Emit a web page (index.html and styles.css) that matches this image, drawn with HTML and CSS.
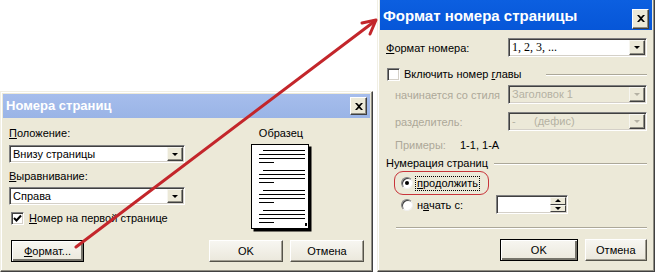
FILE: index.html
```html
<!doctype html>
<html lang="ru">
    <head>
        <meta charset="UTF-8" />
        <meta name="viewport" content="width=device-width, initial-scale=1.0" />
        <title>Номера страниц</title>
        <link rel="stylesheet" href="styles.css">
    </head>
    <body>
        <div class="desktop">
            <!-- Dialog: page numbers -->
            <div class="window win-pages">
                <div class="titlebar inactive">
                    <span class="title">Номера страниц</span>
                    <span class="close"><svg width="8" height="7" viewBox="0 0 8 7"><path d="M0 0h2l2 2 2-2h2L5 3.5 8 7H6L4 5 2 7H0l3-3.5z" fill="#000"/></svg></span>
                </div>
                <div class="client">
                    <div class="top-row">
                        <div class="fields">
                            <div class="label first"><u>П</u>оложение:</div>
                            <div class="combo c-pos"><span class="combo-text">Внизу страницы</span><span class="combo-btn"><i class="tri"></i></span></div>
                            <div class="label second"><u>В</u>ыравнивание:</div>
                            <div class="combo c-align"><span class="combo-text">Справа</span><span class="combo-btn"><i class="tri"></i></span></div>
                            <label class="check-row">
                                <span class="checkbox"><svg width="9" height="9" viewBox="0 0 9 9"><path d="M1 4l2.5 2.5L8 1.5" stroke="#000" stroke-width="2" fill="none"/></svg></span>
                                <span><u>Н</u>омер на первой странице</span>
                            </label>
                        </div>
                        <div class="preview">
                            <div class="label first center">Образец</div>
                            <svg class="page" width="61" height="88" viewBox="0 0 61 88">
                                <rect x="2.5" y="2.5" width="58" height="85" fill="#000"/>
                                <rect x="0.5" y="0.5" width="57" height="84" fill="#fff" stroke="#000"/>
                                <g stroke="#000" stroke-width="1">
                                    <path d="M12 6.5h42M8 10.5h46M8 14.5h46M8 18.5h15"/>
                                    <path d="M12 26.5h42M8 30.5h46M8 34.5h46M8 38.5h15"/>
                                    <path d="M12 46.5h42M8 50.5h46M8 54.5h46M8 58.5h15"/>
                                    <path d="M12 66.5h42M8 70.5h46M8 74.5h46M8 78.5h15"/>
                                </g>
                                <rect x="54" y="79" width="2" height="3" fill="#000"/>
                            </svg>
                        </div>
                    </div>
                    <div class="button-row">
                        <button class="btn btn-default btn-format"><u>Ф</u>ормат...</button>
                        <span class="spacer"></span>
                        <button class="btn btn-ok">OK</button>
                        <button class="btn btn-cancel">Отмена</button>
                    </div>
                </div>
            </div>

            <!-- Dialog: page number format -->
            <div class="window win-format">
                <div class="titlebar active">
                    <span class="title">Формат номера страницы</span>
                    <span class="close"><svg width="8" height="7" viewBox="0 0 8 7"><path d="M0 0h2l2 2 2-2h2L5 3.5 8 7H6L4 5 2 7H0l3-3.5z" fill="#000"/></svg></span>
                </div>
                <div class="client">
                    <div class="row row-format">
                        <span class="row-label"><u>Ф</u>ормат номера:</span>
                        <div class="combo wide"><span class="combo-text serif">1, 2, 3, ...</span><span class="combo-btn"><i class="tri"></i></span></div>
                    </div>
                    <div class="group-head row-chapter">
                        <span class="checkbox"></span>
                        <span class="group-text">Включить номер <u>г</u>лавы</span>
                        <span class="groove"></span>
                    </div>
                    <div class="row row-style">
                        <span class="row-label indent disabled">начинается со стиля</span>
                        <div class="combo wide off"><span class="combo-text">Заголовок 1</span><span class="combo-btn"><i class="tri"></i></span></div>
                    </div>
                    <div class="row row-sep">
                        <span class="row-label indent disabled">разделитель:</span>
                        <div class="combo wide off"><span class="combo-text">-&nbsp;&nbsp;&nbsp;&nbsp;&nbsp;&nbsp;(дефис)</span><span class="combo-btn"><i class="tri"></i></span></div>
                    </div>
                    <div class="row row-examples">
                        <span class="examples-label indent disabled">Примеры:</span>
                        <span>1-1, 1-А</span>
                    </div>
                    <div class="group-head row-numbering">
                        <span class="group-text">Нумерация страниц</span>
                        <span class="groove"></span>
                    </div>
                    <div class="mark">
                        <span class="radio on"></span>
                        <span class="focus"><u>п</u>родолжить</span>
                    </div>
                    <div class="row row-start">
                        <span class="radio-label"><span class="radio"></span><span>н<u>а</u>чать с:</span></span>
                        <div class="spin">
                            <span class="spin-field"></span>
                            <span class="spin-btns"><span class="spin-btn"><i class="tri up"></i></span><span class="spin-btn"><i class="tri"></i></span></span>
                        </div>
                    </div>
                    <div class="separator"></div>
                    <div class="button-row right">
                        <button class="btn btn-default btn-ok2">OK</button>
                        <button class="btn btn-cancel2">Отмена</button>
                    </div>
                </div>
            </div>

            <!-- red pointer arrow drawn over both dialogs -->
            <svg class="arrow" width="663" height="279" viewBox="0 0 663 279">
                <g stroke="#c3262b" stroke-width="3" fill="none" stroke-linecap="round" stroke-linejoin="round">
                    <path d="M76 247L375 21"/>
                    <path d="M362 23L376 20L370 34"/>
                </g>
            </svg>
        </div>
    </body>
</html>
```

FILE: styles.css
```css
body {
    margin: 0;
    background: #fff;
    font-family: "Liberation Sans", Arial, sans-serif;
    font-size: 11px;
    line-height: 14px;
    color: #000;
}
.desktop {
    position: relative;
    width: 663px;
    height: 279px;
    overflow: hidden;
}
u {
    text-decoration: underline;
    text-underline-offset: 1px;
}

/* windows */
.window {
    position: absolute;
    box-sizing: border-box;
    display: flex;
    flex-direction: column;
    background: #ece9d8;
    border: 1px solid;
    border-color: #f1efe4 #404040 #404040 #f1efe4;
    box-shadow: inset -1px -1px #8f8d82, inset 1px 1px #fff;
    padding: 2px;
}
.win-pages {
    left: 0;
    top: 91px;
    width: 373px;
    height: 181px;
}
.win-format {
    left: 377px;
    top: -3px;
    width: 278px;
    height: 275px;
}
.titlebar {
    flex-shrink: 0;
    display: flex;
    align-items: center;
    justify-content: space-between;
    box-sizing: border-box;
    padding: 0 3px 0 3px;
    color: #fff;
    font-weight: bold;
    font-size: 13px;
}
.titlebar.inactive {
    height: 24px;
    background: linear-gradient(#a6bdec, #9ab4e6);
}
.titlebar.active {
    height: 30px;
    padding: 1px 3px 0 3px;
    font-size: 15px;
    background: linear-gradient(#0c5fe0, #0656d8);
}
.close {
    display: flex;
    align-items: center;
    justify-content: center;
    width: 17px;
    height: 18px;
    box-sizing: border-box;
    background: #ece9d8;
    border: 1px solid;
    border-color: #fff #404040 #404040 #fff;
    box-shadow: inset -1px -1px #8f8d82;
}
.titlebar.active .close {
    width: 17px;
    height: 20px;
    margin-top: 6px;
}
.client {
    flex: 1;
    display: flex;
    flex-direction: column;
}

/* page numbers dialog */
.win-pages .client {
    padding: 0 6px 6px 6px;
}
.top-row {
    display: flex;
}
.fields {
    width: 176px;
    display: flex;
    flex-direction: column;
}
.label {
    height: 14px;
}
.label.first {
    margin-top: 8px;
}
.label.second {
    margin-top: 6px;
}
.label.center {
    text-align: center;
}
.c-pos {
    margin-top: 5px;
}
.c-align {
    margin-top: 4px;
}
.check-row {
    display: flex;
    align-items: center;
    gap: 5px;
    height: 14px;
    margin: 6px 0 0 2px;
}
.preview {
    width: 100px;
    margin-left: 46px;
    display: flex;
    flex-direction: column;
    align-items: center;
}
.page {
    margin-top: 4px;
}
.button-row {
    display: flex;
    margin-top: 8px;
    gap: 7px;
}
.button-row.right {
    justify-content: flex-end;
    margin-top: auto;
    padding-left: 114px;
}
.spacer {
    flex: 1;
}

/* combo boxes */
.combo {
    display: flex;
    height: 18px;
    box-sizing: border-box;
    background: #fff;
    border: 1px solid;
    border-color: #808080 #fff #fff #808080;
    box-shadow: inset 1px 1px #404040, inset -1px -1px #d4d0c8;
}
.combo-text {
    flex: 1;
    padding: 1px 0 0 3px;
    white-space: nowrap;
    overflow: hidden;
}
.combo-text.serif {
    font-family: "Liberation Serif", "Times New Roman", serif;
    font-size: 12px;
}
.combo-btn {
    width: 16px;
    margin: 1px;
    box-sizing: border-box;
    display: flex;
    align-items: center;
    justify-content: center;
    background: #ece9d8;
    border: 1px solid;
    border-color: #f7f6f0 #404040 #404040 #f7f6f0;
    box-shadow: inset -1px -1px #8f8d82;
}
.tri {
    width: 0;
    height: 0;
    border-left: 3px solid transparent;
    border-right: 3px solid transparent;
    border-top: 3px solid #000;
}
.tri.up {
    border-top: 0;
    border-bottom: 3px solid #000;
}
.combo.off {
    background: #ece9d8;
    color: #b4b1a3;
}
.combo.off .tri {
    border-top-color: #b4b1a3;
}
.disabled {
    color: #aca899;
}

/* check and radio */
.checkbox {
    width: 13px;
    height: 13px;
    box-sizing: border-box;
    display: flex;
    align-items: center;
    justify-content: center;
    background: #fff;
    border: 1px solid;
    border-color: #808080 #fff #fff #808080;
    box-shadow: inset 1px 1px #404040, inset -1px -1px #d4d0c8;
}
.radio {
    position: relative;
    width: 12px;
    height: 12px;
    box-sizing: border-box;
    border-radius: 50%;
    background: #fff;
    border: 1px solid;
    border-color: #808080 #f0f0f0 #f0f0f0 #808080;
    box-shadow: inset 1px 1px #404040;
}
.radio.on::after {
    content: "";
    position: absolute;
    left: 3px;
    top: 3px;
    width: 4px;
    height: 4px;
    border-radius: 50%;
    background: #000;
}

/* format dialog */
.win-format .client {
    padding: 0 5px 8px 6px;
}
.row {
    display: flex;
    align-items: center;
}
.row-label {
    width: 122px;
    white-space: nowrap;
}
.indent {
    padding-left: 9px;
    box-sizing: border-box;
}
.combo.wide {
    width: 139px;
    height: 19px;
}
.row-format {
    margin-top: 8px;
}
.row-style {
    margin-top: 4px;
}
.row-sep {
    margin-top: 8px;
}
.row-examples {
    margin-top: 7px;
    height: 14px;
}
.examples-label {
    width: 74px;
}
.group-head {
    display: flex;
    align-items: center;
    height: 14px;
}
.row-chapter {
    margin: 10px 0 0 1px;
    gap: 4px;
}
.row-numbering {
    margin-top: 4px;
}
.group-text {
    white-space: nowrap;
}
.groove {
    flex: 1;
    height: 0;
    margin: 2px 0 0 6px;
    border-top: 1px solid #aca899;
    border-bottom: 1px solid #fff;
}
.row-chapter .groove {
    margin-left: 20px;
}
.mark {
    display: flex;
    align-items: center;
    gap: 3px;
    width: 95px;
    height: 24px;
    box-sizing: border-box;
    margin: 1px 0 0 8px;
    padding-left: 6px;
    border: 1px solid #c8343a;
    border-radius: 9px;
}
.focus {
    outline: 1px dotted #000;
    outline-offset: 0;
    padding: 0 1px;
    line-height: 13px;
}
.row-start {
    height: 19px;
}
.radio-label {
    display: flex;
    align-items: center;
    gap: 4px;
    width: 110px;
    padding-left: 15px;
    box-sizing: border-box;
}
.spin {
    display: flex;
    width: 72px;
    height: 19px;
    box-sizing: border-box;
    background: #fff;
    border: 1px solid;
    border-color: #808080 #fff #fff #808080;
    box-shadow: inset 1px 1px #404040, inset -1px -1px #d4d0c8;
}
.spin-field {
    flex: 1;
}
.spin-btns {
    display: flex;
    flex-direction: column;
    width: 16px;
    margin: 1px;
}
.spin-btn {
    flex: 1;
    display: flex;
    align-items: center;
    justify-content: center;
    box-sizing: border-box;
    background: #ece9d8;
    border: 1px solid;
    border-color: #f7f6f0 #404040 #404040 #f7f6f0;
}
.separator {
    margin: 13px 0 0 10px;
    border-top: 1px solid #aca899;
    border-bottom: 1px solid #fff;
}

/* buttons */
.btn {
    height: 22px;
    box-sizing: border-box;
    padding: 0;
    font: inherit;
    color: #000;
    background: linear-gradient(#f7f6f1, #ebe8dc);
    border: 1px solid;
    border-color: #fff #55534a #55534a #fff;
    box-shadow: inset -1px -1px #a19e92;
    text-align: center;
}
.btn-default {
    border: 1px solid #000;
    box-shadow: inset 1px 1px #fff, inset -2px -2px #76746b;
}
.btn-format {
    width: 73px;
    margin-left: 2px;
}
.btn-ok,
.btn-cancel {
    width: 74px;
}
.btn-ok2 {
    width: 82px;
}
.btn-cancel2 {
    width: 66px;
}

/* annotation arrow */
.arrow {
    position: absolute;
    left: 0;
    top: 0;
    pointer-events: none;
}
```
